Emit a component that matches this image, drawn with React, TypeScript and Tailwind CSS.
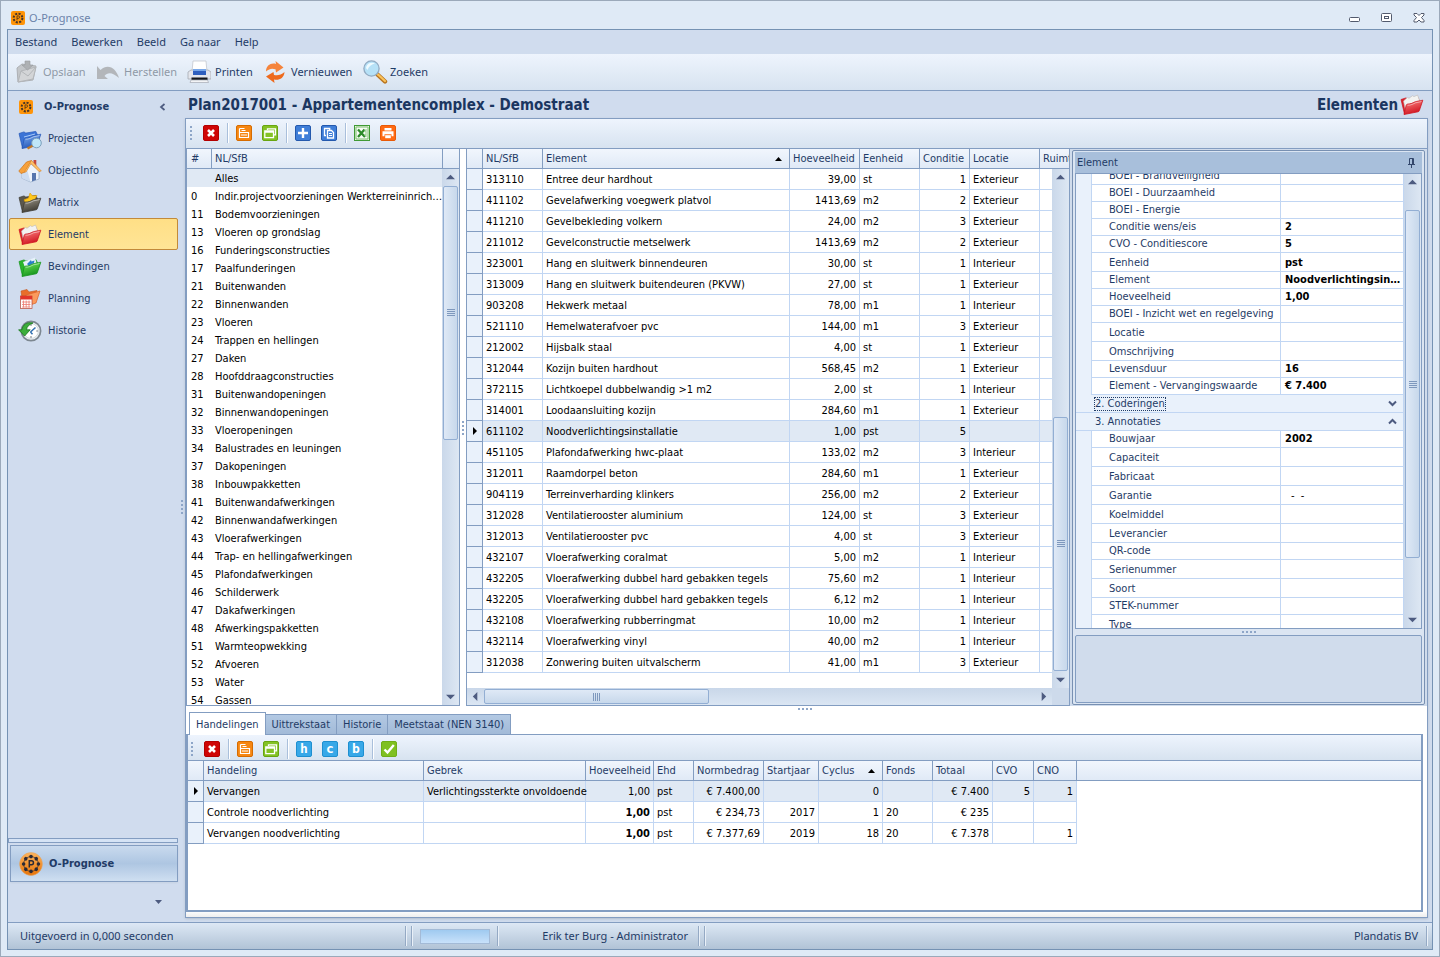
import React from 'react';
import { clsx } from 'clsx';

//DATA
const categories: [string, string][] = [
  ['', 'Alles'],
  ['0', 'Indir.projectvoorzieningen Werkterreininrichting'],
  ['11', 'Bodemvoorzieningen'],
  ['13', 'Vloeren op grondslag'],
  ['16', 'Funderingsconstructies'],
  ['17', 'Paalfunderingen'],
  ['21', 'Buitenwanden'],
  ['22', 'Binnenwanden'],
  ['23', 'Vloeren'],
  ['24', 'Trappen en hellingen'],
  ['27', 'Daken'],
  ['28', 'Hoofddraagconstructies'],
  ['31', 'Buitenwandopeningen'],
  ['32', 'Binnenwandopeningen'],
  ['33', 'Vloeropeningen'],
  ['34', 'Balustrades en leuningen'],
  ['37', 'Dakopeningen'],
  ['38', 'Inbouwpakketten'],
  ['41', 'Buitenwandafwerkingen'],
  ['42', 'Binnenwandafwerkingen'],
  ['43', 'Vloerafwerkingen'],
  ['44', 'Trap- en hellingafwerkingen'],
  ['45', 'Plafondafwerkingen'],
  ['46', 'Schilderwerk'],
  ['47', 'Dakafwerkingen'],
  ['48', 'Afwerkingspakketten'],
  ['51', 'Warmteopwekking'],
  ['52', 'Afvoeren'],
  ['53', 'Water'],
  ['54', 'Gassen'],
];

const elements: string[][] = [
  ['313110', 'Entree deur hardhout', '39,00', 'st', '1', 'Exterieur'],
  ['411102', 'Gevelafwerking voegwerk platvol', '1413,69', 'm2', '2', 'Exterieur'],
  ['411210', 'Gevelbekleding volkern', '24,00', 'm2', '3', 'Exterieur'],
  ['211012', 'Gevelconstructie metselwerk', '1413,69', 'm2', '2', 'Exterieur'],
  ['323001', 'Hang en sluitwerk binnendeuren', '30,00', 'st', '1', 'Interieur'],
  ['313009', 'Hang en sluitwerk buitendeuren (PKVW)', '27,00', 'st', '1', 'Exterieur'],
  ['903208', 'Hekwerk metaal', '78,00', 'm1', '1', 'Interieur'],
  ['521110', 'Hemelwaterafvoer pvc', '144,00', 'm1', '3', 'Exterieur'],
  ['212002', 'Hijsbalk staal', '4,00', 'st', '1', 'Exterieur'],
  ['312044', 'Kozijn buiten hardhout', '568,45', 'm2', '1', 'Exterieur'],
  ['372115', 'Lichtkoepel dubbelwandig >1 m2', '2,00', 'st', '1', 'Interieur'],
  ['314001', 'Loodaansluiting kozijn', '284,60', 'm1', '1', 'Exterieur'],
  ['611102', 'Noodverlichtingsinstallatie', '1,00', 'pst', '5', ''],
  ['451105', 'Plafondafwerking hwc-plaat', '133,02', 'm2', '3', 'Interieur'],
  ['312011', 'Raamdorpel beton', '284,60', 'm1', '1', 'Exterieur'],
  ['904119', 'Terreinverharding klinkers', '256,00', 'm2', '2', 'Exterieur'],
  ['312028', 'Ventilatierooster aluminium', '124,00', 'st', '3', 'Exterieur'],
  ['312013', 'Ventilatierooster pvc', '4,00', 'st', '3', 'Exterieur'],
  ['432107', 'Vloerafwerking coralmat', '5,00', 'm2', '1', 'Interieur'],
  ['432205', 'Vloerafwerking dubbel hard gebakken tegels', '75,60', 'm2', '1', 'Interieur'],
  ['432205', 'Vloerafwerking dubbel hard gebakken tegels', '6,12', 'm2', '1', 'Interieur'],
  ['432108', 'Vloerafwerking rubberringmat', '10,00', 'm2', '1', 'Interieur'],
  ['432114', 'Vloerafwerking vinyl', '40,00', 'm2', '1', 'Interieur'],
  ['312038', 'Zonwering buiten uitvalscherm', '41,00', 'm1', '3', 'Exterieur'],
];

type Prop = { label: string; value?: string; tall?: boolean; group?: 'open' | 'closed' };

const props: Prop[] = [
  { label: 'BOEI - Brandveiligheid' },
  { label: 'BOEI - Duurzaamheid' },
  { label: 'BOEI - Energie' },
  { label: 'Conditie wens/eis', value: '2' },
  { label: 'CVO - Conditiescore', value: '5' },
  { label: 'Eenheid', value: 'pst', tall: true },
  { label: 'Element', value: 'Noodverlichtingsinstallatie' },
  { label: 'Hoeveelheid', value: '1,00' },
  { label: 'BOEI - Inzicht wet en regelgeving' },
  { label: 'Locatie', tall: true },
  { label: 'Omschrijving', tall: true },
  { label: 'Levensduur', value: '16' },
  { label: 'Element - Vervangingswaarde', value: '€ 7.400' },
  { label: '2. Coderingen', group: 'closed' },
  { label: '3. Annotaties', group: 'open' },
  { label: 'Bouwjaar', value: '2002' },
  { label: 'Capaciteit', tall: true },
  { label: 'Fabricaat', tall: true },
  { label: 'Garantie', value: '-  -', tall: true },
  { label: 'Koelmiddel', tall: true },
  { label: 'Leverancier', tall: true },
  { label: 'QR-code' },
  { label: 'Serienummer', tall: true },
  { label: 'Soort', tall: true },
  { label: 'STEK-nummer' },
  { label: 'Type', tall: true },
];

const actions: string[][] = [
  ['Vervangen', 'Verlichtingssterkte onvoldoende', '1,00', 'pst', '€ 7.400,00', '', '0', '', '€ 7.400', '5', '1'],
  ['Controle noodverlichting', '', '1,00', 'pst', '€ 234,73', '2017', '1', '20', '€ 235', '', ''],
  ['Vervangen noodverlichting', '', '1,00', 'pst', '€ 7.377,69', '2019', '18', '20', '€ 7.378', '', '1'],
];

const th = 'h-5 border-r border-b border-[#839dc1] px-[3px] text-left font-normal text-[#1f3b66] whitespace-nowrap overflow-hidden';
const td = 'h-[21px] border-r border-b border-[#c1d6f3] pt-0.5 pl-[3px] whitespace-nowrap';
const headRow = 'bg-linear-to-b from-[#f1f6fd] to-[#dfe9f6]';
const indicator = 'h-[21px] border-r border-b border-[#839dc1] bg-[#e9f1fb] p-0';

//ICONS
const Logo = ({ size }: { size: number }) => (
  <svg width={size} height={size} viewBox="0 0 14 14">
    <rect width="14" height="14" rx="2" fill="#ff9408" />
    <circle cx="7" cy="7" r="4.4" fill="none" stroke="#46352a" strokeWidth="2" strokeDasharray="2.1 1.35" />
    <path d="M6 9.3V4.9h1.3a1.2 1.2 0 010 2.5H6" fill="none" stroke="#5b3a14" strokeWidth="0.9" />
  </svg>
);

const RoundLogo = () => (
  <svg width="24" height="24" viewBox="0 0 24 24">
    <defs>
      <linearGradient id="round" x1="0" y1="0" x2="0" y2="1">
        <stop offset="0" stopColor="#fdb45c" />
        <stop offset="1" stopColor="#e87408" />
      </linearGradient>
    </defs>
    <circle cx="12" cy="12" r="11.4" fill="url(#round)" stroke="#e2a463" strokeWidth="0.6" />
    <circle cx="12" cy="12" r="7.4" fill="none" stroke="#2c2a35" strokeWidth="0.7" />
    {[0, 45, 90, 135, 180, 225, 270, 315].map((a) => (
      <circle key={a} cx="12" cy="4.6" r="1.8" fill="#2c2a35" transform={`rotate(${a} 12 12)`} />
    ))}
    <path d="M10.3 15.5V8.8h2.2a1.9 1.9 0 010 3.900h-2.200" fill="none" stroke="#2c2a35" strokeWidth="1.5" />
  </svg>
);

const Folder = ({ id, light, dark, back, children }: { id: string; light: string; dark: string; back: string; children?: React.ReactNode }) => (
  <svg width="24" height="22" viewBox="0 0 24 22">
    <defs>
      <linearGradient id={id} x1="0" y1="0" x2="0.4" y2="1">
        <stop offset="0" stopColor={light} />
        <stop offset="1" stopColor={dark} />
      </linearGradient>
    </defs>
    <path d="M1 5.500l5-1.600 1.800 1.200 10-1.700L20 8 4.500 20z" fill={back} stroke={dark} strokeWidth="0.7" />
    {children}
    <path d="M4 20.500L6.200 11.300c.2-.7.7-1.100 1.400-1.200 3 .2 5-1.100 7.500-2.300.7-.3 7.700-1.600 7.700-1.600l-3.500 10.500c-.2.6-.7 1-1.300 1.100z" fill={`url(#${id})`} stroke={dark} strokeWidth="0.8" strokeLinejoin="round" />
    <path d="M7.500 11.200c3.500.2 5.500-1.300 8-2.400l6-1.200" fill="none" stroke="#fff" strokeOpacity="0.6" strokeWidth="0.8" />
  </svg>
);

const paper = <path d="M3.500 7l4-3.600 1.500.8 3.500-2.500 1.500.9L17.500 1l2.300 6-12.300 3.500-2 6z" fill="#f3f3f1" stroke="#bdb9b6" strokeWidth="0.6" />;

const RedFolder = ({ id }: { id: string }) => (
  <Folder id={id} light="#ff8a86" dark="#cf1420" back="#d8222a">
    {paper}
  </Folder>
);

const NavIcon = ({ name }: { name: string }) => {
  switch (name) {
    case 'Projecten':
      return (
        <Folder id="f-blue" light="#7fb0f4" dark="#2457b8" back="#3c74d6">
          <path d="M6 9l11-3" stroke="#a9cbf8" />
        </Folder>
      );
    case 'Matrix':
      return (
        <Folder id="f-dark" light="#a39d8e" dark="#3e3b33" back="#5b574c">
          <path d="M12 1l2.400 2.800 4.600-.3-2 3.400 2 2.600L8 11.500 6 7.800l4.500-1.700z" fill="#ffc81c" stroke="#e29a06" strokeWidth="0.6" />
        </Folder>
      );
    case 'Element':
      return <RedFolder id="f-red" />;
    case 'Bevindingen':
      return (
        <Folder id="f-green" light="#74ea5b" dark="#14931c" back="#29b52c">
          <path d="M5 6l12-4.500 2 7-12 3z" fill="#e6f1fa" />
          <path d="M9 8l4-4 .5 1.500 3-1-1 4-1-1L11 10z" fill="#2a7fc9" />
        </Folder>
      );
    case 'Planning':
      return (
        <svg width="24" height="22" viewBox="0 0 24 22">
          <path d="M3 3l6-1.500L11 4l8-1.500-3 12-11 3z" fill="#e96d2b" stroke="#c4561c" strokeWidth="0.6" />
          <path d="M8 7l14-4-4 12-9 3z" fill="#fb9a5c" stroke="#d8622a" strokeWidth="0.7" />
          <rect x="2.500" y="8" width="11.500" height="12.500" fill="#fff" stroke="#b6402f" strokeWidth="0.7" />
          <path d="M2.500 8H14v3.500H2.500z" fill="#e2352a" />
          <path d="M4 14h8.500M4 16.500h8.500M4 19h8.500M5.500 12.500v7M8.200 12.500v7M11 12.500v7" stroke="#ec7a70" strokeWidth="0.8" />
        </svg>
      );
    case 'Historie':
      return (
        <svg width="24" height="22" viewBox="0 0 24 22">
          <circle cx="13" cy="11" r="9.600" fill="#eef2f5" stroke="#7c8790" strokeWidth="1.700" />
          <circle cx="13" cy="11" r="7.400" fill="#fff" stroke="#c6d0d7" strokeWidth="0.8" />
          <path d="M13 4.200v1.600M13 16.200v1.600M18.400 11h1.400" stroke="#55616b" />
          <path d="M12.500 12l5-4.500M12.500 12l2 2.200" stroke="#2f6fb0" strokeWidth="1.500" />
          <path d="M15 3C8.500 1.500 4.500 5 4 9.800H.6L6.600 16l5.600-6.200H8.500C8.800 6.500 11.300 4.300 15 3z" fill="#3cae3b" stroke="#17751c" strokeWidth="0.8" />
        </svg>
      );
    default:
      return (
        <svg width="24" height="24" viewBox="0 0 24 24">
          <path d="M15.500 1h2.800v6h-2.800z" fill="#c5463a" />
          <path d="M3.500 11l7.500-7.500 10 8V20L12.500 23l-9-4z" fill="#eef3fa" stroke="#94a9c6" strokeWidth="0.7" />
          <path d="M3.500 12L8 7l4.500 15.800-9-3.800z" fill="#cddcf0" />
          <path d="M.8 12L8.500 3l5-1.500L7.300 13 3 14.500z" fill="#f7a13b" stroke="#cf7314" strokeWidth="0.7" />
          <path d="M13.500 1.500L23.300 12l-2.300.5-8-8-5 8.500-1.500-.2z" fill="#ffc16a" stroke="#d9821f" strokeWidth="0.6" />
          <path d="M14 14h4v7L14 22.500z" fill="#5876ad" />
        </svg>
      );
  }
};

const Glass = () => (
  <svg className="absolute right-0 bottom-0" width="16" height="13" viewBox="0 0 16 13">
    <path d="M7 8.500l-5.500 3" stroke="#c07a2a" strokeWidth="2.400" />
    <circle cx="10.500" cy="6" r="4.800" fill="#bfe6f8" stroke="#7c9fbb" />
  </svg>
);

const tiles: Record<string, [string, string, React.ReactNode]> = {
  Verwijderen: ['#cf0505', '#b30000', <path key="p" d="M5 5l6 6M11 5l-6 6" stroke="#fff" strokeWidth="2.600" />],
  Kaart: [
    '#f68712',
    '#d66c00',
    <path key="p" d="M3.500 3.500v9h9v-5h-9M3.500 3.500h5M5.500 5.500h4M5 10h6" fill="none" stroke="#fff" strokeWidth="1.200" />,
  ],
  Vensters: ['#84c225', '#68a510', <path key="p" d="M5.500 5V3.800h8v6h-1.600M2.800 6h8.700v6.600H2.800zM2.800 7.200h8.700" fill="none" stroke="#fff" strokeWidth="1.300" />],
  Toevoegen: ['#3f7ed8', '#2459ad', <path key="p" d="M8 3v10M3 8h10" stroke="#fff" strokeWidth="2.400" />],
  Kopiëren: [
    '#3f7ed8',
    '#2459ad',
    <g key="g" stroke="#fff" fill="none">
      <path d="M5 10.500H3.500v-7h5.200V5" strokeWidth="1.300" />
      <path d="M6.500 5.500h4l2 2v5.500h-6z" fill="#3f7ed8" strokeWidth="1.300" />
      <path d="M8 8.500h3M8 10.500h3" />
    </g>,
  ],
  Excel: [
    '#e9f4e2',
    '#3f9a35',
    <g key="g">
      <path d="M2 2h12v12H2z" fill="#f8fcf6" stroke="#79bd6d" />
      <path d="M4 4.500l7 7.500M10.500 4.500L4 12" stroke="#2c8a2a" strokeWidth="2.300" />
      <path d="M12 4v8M12 6h-2M12 10h-2" stroke="#8cc983" />
    </g>,
  ],
  Afdrukken: [
    '#ff6a13',
    '#e85a08',
    <g key="g">
      <path d="M4.500 3h7v2.500h-7zM2.500 6.300h11v5h-2v-2h-7v2h-2z" fill="#fff" />
      <path d="M5.200 10.200h5.600v3H5.200z" fill="#fff" />
    </g>,
  ],
  Akkoord: ['#7fc020', '#6fae17', <path key="p" d="M3.500 8.500l3 3L12.800 4" fill="none" stroke="#fff" strokeWidth="2.400" />],
};

const Tile = ({ name }: { name: string }) => {
  const tile = tiles[name];
  if (!tile) {
    return (
      <button
        aria-label={name}
        className="flex size-4 items-center justify-center rounded-xs border border-[#1e8fd0] bg-[#38a8e8] font-['DejaVu_Sans_Mono',monospace] text-[13px] leading-none font-bold text-white"
      >
        {name}
      </button>
    );
  }
  return (
    <button aria-label={name} className="size-4">
      <svg width="16" height="16" viewBox="0 0 16 16">
        <rect x="0.5" y="0.5" width="15" height="15" rx={name === 'Excel' ? 0 : 1.5} fill={tile[0]} stroke={tile[1]} />
        {tile[2]}
      </svg>
    </button>
  );
};

const Dots = ({ vertical }: { vertical?: boolean }) => (
  <div className={clsx('flex gap-0.5', vertical && 'flex-col')}>
    {[0, 1, 2, 3].map((i) => (
      <span key={i} className="size-0.5 bg-[#8ea6c8]" />
    ))}
  </div>
);

const Toolbar = ({ groups, className }: { groups: string[][]; className: string }) => (
  <div className={clsx('flex shrink-0 items-center border-b border-[#839dc1] bg-linear-to-b from-[#eef4fd] to-[#d7e3f0]', className)}>
    <Dots vertical />
    {groups.map((group, i) => (
      <React.Fragment key={i}>
        {i > 0 && <div className="mr-[7px] ml-2 h-5 w-0.5 border-r border-l border-r-white border-l-[#a9bfdb]" />}
        <div className={clsx('flex gap-2.5', i === 0 && 'ml-[11px]')}>
          {group.map((name) => (
            <Tile key={name} name={name} />
          ))}
        </div>
      </React.Fragment>
    ))}
  </div>
);

//SCROLLBAR
const Arrow = ({ d }: { d: string }) => (
  <span className="flex size-[17px] shrink-0 items-center justify-center">
    <svg width="9" height="9" viewBox="0 0 10 10">
      <path d={d} fill="#4d5b80" />
    </svg>
  </span>
);

const Scrollbar = ({ before, thumb, after, horizontal }: { before: number; thumb: number; after: number; horizontal?: boolean }) => (
  <div
    className={clsx(
      'flex',
      horizontal ? 'h-[17px] w-full bg-linear-to-b from-[#c9d7e9] to-[#dbe6f3]' : 'h-full w-[17px] flex-col bg-linear-to-r from-[#cad8ea] to-[#dde7f3]'
    )}
  >
    <Arrow d={horizontal ? 'M7 0v10L2 5z' : 'M0 7h10L5 2z'} />
    <div style={{ flexGrow: before }} />
    <div
      style={{ flexGrow: thumb }}
      className={clsx(
        'flex basis-0 items-center justify-center rounded-xs border border-[#92aed3]',
        horizontal ? 'my-px bg-linear-to-b from-[#dfe9f6] to-[#c7d8eb]' : 'mx-px bg-linear-to-r from-[#dfe9f6] to-[#c7d8eb]'
      )}
    >
      <div className={clsx('flex gap-px', !horizontal && 'flex-col')}>
        {[0, 1, 2, 3].map((i) => (
          <span key={i} className={clsx('bg-[#7e98bd]', horizontal ? 'h-2 w-px' : 'h-px w-2')} />
        ))}
      </div>
    </div>
    <div style={{ flexGrow: after }} />
    <Arrow d={horizontal ? 'M3 0v10l5-5z' : 'M0 3h10L5 8z'} />
  </div>
);

const SortMark = () => (
  <svg className="mr-1 shrink-0" width="7" height="4" viewBox="0 0 7 4">
    <path d="M0 4h7L3.500 0z" fill="#000" />
  </svg>
);

const RowMark = () => (
  <svg className="mx-auto" width="4" height="8" viewBox="0 0 4 8">
    <path d="M0 0v8l4-4z" fill="#000" />
  </svg>
);

//PANELS
const CategoryTable = () => (
  <div className="relative w-[274px] shrink-0 overflow-hidden border-x border-b border-[#839dc1] bg-white">
    <table className="w-full table-fixed border-separate border-spacing-0">
      <colgroup>
        <col className="w-[25px]" />
        <col />
        <col className="w-4" />
      </colgroup>
      <thead>
        <tr className={headRow}>
          <th className={clsx(th, 'pl-1')}>#</th>
          <th className={th}>NL/SfB</th>
          <th className="h-5 border-b border-[#839dc1]"></th>
        </tr>
      </thead>
      <tbody>
        {categories.map(([code, name]) => (
          <tr key={code} className={code === '' ? 'bg-[#e0e9f4]' : ''}>
            <td className="h-[18px] pt-0.5 pl-1">{code}</td>
            <td className="h-[18px] truncate pt-0.5 pl-[3px]">{name}</td>
            <td></td>
          </tr>
        ))}
      </tbody>
    </table>
    <div className="absolute top-5 right-0 bottom-0">
      <Scrollbar before={0} thumb={254} after={250} />
    </div>
  </div>
);

const ElementTable = () => (
  <div className="relative min-w-0 flex-1 overflow-hidden border-x border-b border-[#839dc1] bg-white">
    <table className="w-full table-fixed border-separate border-spacing-0">
      <colgroup>
        <col className="w-4" />
        <col className="w-[60px]" />
        <col />
        <col className="w-[70px]" />
        <col className="w-[60px]" />
        <col className="w-[50px]" />
        <col className="w-[70px]" />
        <col className="w-[29px]" />
      </colgroup>
      <thead>
        <tr className={headRow}>
          <th className={th}></th>
          <th className={th}>NL/SfB</th>
          <th className={th}>
            <div className="flex items-center justify-between">
              Element
              <SortMark />
            </div>
          </th>
          <th className={th}>Hoeveelheid</th>
          <th className={th}>Eenheid</th>
          <th className={th}>Conditie</th>
          <th className={th}>Locatie</th>
          <th className="overflow-hidden border-b border-[#839dc1] pl-[3px] text-left font-normal whitespace-nowrap text-[#1f3b66]">Ruimte</th>
        </tr>
      </thead>
      <tbody>
        {elements.map((row, i) => (
          <tr key={i} className={row[0] === '611102' ? 'bg-[#e0e9f4]' : ''}>
            <td className={indicator}>{row[0] === '611102' && <RowMark />}</td>
            {row.map((value, c) => (
              <td key={c} className={clsx(td, (c === 2 || c === 4) && 'pr-[3px] text-right')}>
                {value}
              </td>
            ))}
            <td className="border-b border-[#c1d6f3]"></td>
          </tr>
        ))}
      </tbody>
    </table>
    <div className="absolute top-5 right-0 bottom-[17px]">
      <Scrollbar before={231} thumb={253} after={0} />
    </div>
    <div className="absolute inset-x-0 bottom-0 bg-[#cddaeb] pr-[17px]">
      <Scrollbar horizontal before={0} thumb={224} after={328} />
    </div>
  </div>
);

const PropertyPanel = () => (
  <div className="flex w-[357px] shrink-0 flex-col bg-[#d0dcec] px-0.5 py-px">
    <div className="flex min-h-0 flex-1 flex-col rounded-xs border border-[#7890b2] bg-[#dbe5f2] px-0.5 py-px">
      <div className="flex h-[22px] shrink-0 items-center justify-between border-b border-[#839dc1] bg-[#a8bfdb] px-0.5 text-[#1f3b66]">
        Element
        <button aria-label="Vastzetten" className="mr-1">
          <svg width="9" height="10" viewBox="0 0 9 10">
            <path d="M2.500 6V.5h4V6M1 6.500h7M4.500 6.500V10M5.500.5V6" fill="none" stroke="#33476c" />
          </svg>
        </button>
      </div>
      <div className="flex min-h-0 flex-1 border-x border-b border-[#839dc1] bg-white">
        <div className="min-w-0 flex-1 overflow-hidden border-r border-[#c1d6f3]">
          <table className="-mt-1.5 w-full table-fixed border-separate border-spacing-0 text-[#1f3b66]">
            <colgroup>
              <col className="w-4" />
              <col className="w-[189px]" />
              <col />
            </colgroup>
            <tbody>
              {props.map((p) =>
                p.group ? (
                  <tr key={p.label} className="bg-[#e9f1fb]">
                    <td colSpan={3} className="h-[18px] border-b border-[#c1d6f3] p-0">
                      <button className="flex h-[17px] w-full items-center justify-between pr-1.5 pl-[19px]">
                        <span className={clsx('leading-3', p.group === 'closed' && 'outline outline-dotted outline-[#1f3b66]')}>{p.label}</span>
                        <svg width="9" height="7" viewBox="0 0 9 7">
                          <path d={p.group === 'closed' ? 'M1 1.500l3.500 3.500L8 1.500' : 'M1 5.500L4.500 2 8 5.500'} fill="none" stroke="#4d5b80" strokeWidth="2" />
                        </svg>
                      </button>
                    </td>
                  </tr>
                ) : (
                  <tr key={p.label}>
                    <td className="border-r border-[#c1d6f3] bg-[#e9f1fb] p-0"></td>
                    <td
                      className={clsx('overflow-hidden border-r border-b border-[#c1d6f3] pl-[17px] whitespace-nowrap', p.tall ? 'h-[19px] pt-0.5' : 'h-[17px] leading-4')}
                    >
                      {p.label}
                    </td>
                    <td
                      className={clsx(
                        'truncate border-b border-[#c1d6f3] whitespace-pre text-black',
                        p.label === 'Garantie' ? 'pl-2.5' : 'pl-1 font-bold',
                        p.tall && 'pt-0.5'
                      )}
                    >
                      {p.value}
                    </td>
                  </tr>
                )
              )}
            </tbody>
          </table>
        </div>
        <Scrollbar before={19} thumb={348} after={53} />
      </div>
      <div className="flex h-1.5 shrink-0 items-center justify-center">
        <Dots />
      </div>
      <div className="h-[68px] shrink-0 rounded-xs border border-[#839dc1] bg-[#d0dcec]" />
    </div>
  </div>
);

const ActionTable = () => (
  <table className="w-full table-fixed border-separate border-spacing-0">
    <colgroup>
      <col className="w-4" />
      <col className="w-[220px]" />
      <col className="w-[162px]" />
      <col className="w-[68px]" />
      <col className="w-10" />
      <col className="w-[70px]" />
      <col className="w-[55px]" />
      <col className="w-16" />
      <col className="w-[50px]" />
      <col className="w-[60px]" />
      <col className="w-[41px]" />
      <col className="w-[43px]" />
      <col />
    </colgroup>
    <thead>
      <tr className={headRow}>
        {['', 'Handeling', 'Gebrek', 'Hoeveelheid', 'Ehd', 'Normbedrag', 'Startjaar', 'Cyclus', 'Fonds', 'Totaal', 'CVO', 'CNO'].map((label) => (
          <th key={label} className={th}>
            <div className="flex items-center justify-between">
              {label}
              {label === 'Cyclus' && <SortMark />}
            </div>
          </th>
        ))}
        <th className="border-b border-[#839dc1]"></th>
      </tr>
    </thead>
    <tbody>
      {actions.map((row, i) => (
        <tr key={i}>
          <td className={indicator}>{i === 0 && <RowMark />}</td>
          {row.map((value, c) => (
            <td
              key={c}
              className={clsx(td, i === 0 && 'bg-[#e0e9f4]', [2, 4, 5, 6, 8, 9, 10].includes(c) && 'pr-[3px] text-right', c === 2 && i > 0 && 'font-bold')}
            >
              {value}
            </td>
          ))}
          <td></td>
        </tr>
      ))}
    </tbody>
  </table>
);

const Sidebar = () => (
  <aside className="flex w-[177px] shrink-0 text-[#1f3b66]">
    <div className="flex flex-1 flex-col">
      <div className="flex h-[31px] items-center pr-3 pl-[11px]">
        <Logo size={14} />
        <span className="ml-[11px] flex-1 font-bold">O-Prognose</span>
        <button aria-label="Inklappen">
          <svg width="7" height="8" viewBox="0 0 7 8">
            <path d="M5.500 1L2 4l3.500 3" fill="none" stroke="#4d5b80" strokeWidth="1.700" />
          </svg>
        </button>
      </div>
      <nav className="flex-1 pl-px">
        {['Projecten', 'ObjectInfo', 'Matrix', 'Element', 'Bevindingen', 'Planning', 'Historie'].map((name) => (
          <a
            key={name}
            href="#"
            className={clsx(
              'flex h-8 items-center gap-1.5 border pt-0.5 pl-2',
              name === 'Element' ? 'rounded-xs border-[#c28a3a] bg-linear-to-b from-[#ffdf86] to-[#ffe596]' : 'border-transparent'
            )}
          >
            <span className="relative">
              <NavIcon name={name} />
              {name === 'Projecten' && <Glass />}
            </span>
            {name}
          </a>
        ))}
      </nav>
      <div className="h-[5px] border border-[#839dc1] bg-[#d5e3f5]" />
      <button className="mt-0.5 ml-0.5 flex h-[37px] items-center gap-1.5 border border-[#839dc1] bg-linear-to-b from-[#c9daee] via-[#aec6e2] to-[#cfdff1] pl-2 font-bold shadow-xs">
        <RoundLogo />
        O-Prognose
      </button>
      <button aria-label="Meer" className="mt-4 mr-4 mb-[17px] flex h-[7px] items-center self-end">
        <svg width="7" height="4" viewBox="0 0 7 4">
          <path d="M0 0h7L3.500 4z" fill="#4d5b80" />
        </svg>
      </button>
    </div>
    <div className="flex w-[7px] items-center pl-[3px]">
      <Dots vertical />
    </div>
  </aside>
);

const MainToolbar = () => (
  <div className="flex h-[37px] shrink-0 items-center border-b border-[#839dc1] bg-linear-to-b from-[#eef4fd] to-[#d7e3f0] pl-[7px] text-[#1f3b66]">
    <button className="flex w-[81px] items-center gap-1 text-[#8f99a6]" disabled>
      <svg width="24" height="24" viewBox="0 0 24 24">
        <path d="M2 8l5-4 6 1 8 1-3 14L3 22z" fill="#c3c6c9" stroke="#adb0b4" />
        <path d="M3 22l3-11 15-4-3 12z" fill="#d3d5d7" stroke="#b3b6b9" />
        <path d="M6 11l7 5 8-9" fill="none" stroke="#b3b6b9" />
        <path d="M10 1h5v4h3l-5.500 5L7 5h3z" fill="#aeb1b4" stroke="#989b9f" strokeWidth="0.6" />
      </svg>
      Opslaan
    </button>
    <button className="flex w-[91px] items-center gap-1 text-[#8f99a6]" disabled>
      <svg width="24" height="24" viewBox="0 0 24 24">
        <path d="M1 6v13h11l-3.500-3c3-4 8-4 14.500 2C20 8 12 3 4.500 10z" fill="#b3b6ba" />
      </svg>
      Herstellen
    </button>
    <button className="flex w-[76px] items-center gap-1">
      <svg width="24" height="24" viewBox="0 0 24 24">
        <path d="M6 1h13l1 11H5z" fill="#fff" stroke="#c4c8cf" strokeWidth="0.8" />
        <path d="M1 12l3-2h17l3 2v7H1z" fill="#e4e6ec" stroke="#a5a9b3" strokeWidth="0.8" />
        <path d="M6 9h13v6H6z" fill="#2f5fbe" />
        <path d="M6 9h13v2H6z" fill="#79a8ea" />
        <path d="M4.500 17.500h16V20h-16z" fill="#15171c" />
        <path d="M4 20h16.500l1 2.500H3z" fill="#f3f4f6" stroke="#a5a9b3" strokeWidth="0.7" />
      </svg>
      Printen
    </button>
    <button className="flex w-[99px] items-center gap-1">
      <svg width="24" height="24" viewBox="0 0 24 24">
        <path d="M3 11.500C3 5.500 8 2.500 13 4L12.500 1l8 6.500-7.500 5-.5-3.200C9 8 6.500 8.500 3 11.500z" fill="#f5843c" />
        <path d="M21.500 12c-.5 6.500-5.500 8.500-10.500 7.500l.5 3.500L3 16.500 10.500 12l.5 3c4 .8 7 0 10.500-3z" fill="#ee6a1d" />
      </svg>
      Vernieuwen
    </button>
    <button className="flex items-center gap-0.5">
      <svg width="26" height="24" viewBox="0 0 26 24">
        <path d="M15.500 14.500l7.500 7" stroke="#b87420" strokeWidth="4.400" strokeLinecap="round" />
        <path d="M16 14.500l7 6.500" stroke="#fbc35a" strokeWidth="2.200" strokeLinecap="round" />
        <circle cx="9.500" cy="8.500" r="7.600" fill="#b6e1f7" stroke="#91aac2" strokeWidth="1.300" />
        <path d="M4 8a6 6 0 019-4.500C10 4 7 6 5.500 10z" fill="#eefaff" />
      </svg>
      Zoeken
    </button>
  </div>
);

const Divider = ({ className }: { className?: string }) => <span className={clsx('h-5 w-0.5 border-r border-l border-r-[#e9f0f8] border-l-[#94a9c4]', className)} />;

export default function App() {
  const caption = "font-['Noto_Sans','Open_Sans',sans-serif] text-[11px]";
  return (
    <div className="flex h-screen w-full flex-col overflow-hidden border border-[#9ba9ba] bg-[#dfeaf6] px-1.5 pb-1.5 font-['DejaVu_Sans_Condensed','DejaVu_Sans',sans-serif] text-[11px] leading-4 text-black">
      {/* TITLE BAR */}
      <header className={clsx('flex h-7 shrink-0 items-center pr-2 pl-1 text-[#6c83aa]', caption)}>
        <div className="mt-1.5 flex flex-1 items-center gap-1">
          <Logo size={14} />
          O-Prognose
        </div>
        <div className="mt-1.5 flex items-center gap-5">
          <button aria-label="Minimaliseren">
            <svg width="12" height="12" viewBox="0 0 12 12">
              <rect x="0.5" y="5.500" width="10" height="4" rx="1" fill="#fff" stroke="#525a6d" />
            </svg>
          </button>
          <button aria-label="Maximaliseren">
            <svg width="12" height="12" viewBox="0 0 12 12">
              <rect x="0.5" y="1.500" width="10" height="8" rx="1" fill="#fff" stroke="#525a6d" />
              <rect x="3.500" y="4.500" width="4" height="2" fill="none" stroke="#525a6d" />
            </svg>
          </button>
          <button aria-label="Sluiten">
            <svg width="12" height="12" viewBox="0 0 12 12">
              <path d="M1 1.500h3l2 2 2-2h3v1.500L8.500 5.500 11 8.500V10H8L6 8l-2 2H1V8.500l2.500-3L1 3z" fill="#fff" stroke="#525a6d" />
            </svg>
          </button>
        </div>
      </header>
      <div className="flex min-h-0 flex-1 flex-col border border-[#7592b3] bg-[#d0dcee]">
        {/* MENU */}
        <nav className={clsx('flex h-6 shrink-0 items-center gap-3.5 pl-[7px] text-[#1f3b66]', caption)}>
          {['Bestand', 'Bewerken', 'Beeld', 'Ga naar', 'Help'].map((name) => (
            <button key={name}>{name}</button>
          ))}
        </nav>
        <div className={caption}>
          <MainToolbar />
        </div>
        <div className="flex min-h-0 flex-1">
          <Sidebar />
          <main className="flex min-w-0 flex-1 flex-col pr-1 pb-1">
            <div className="flex h-[27px] shrink-0 items-center justify-between pr-1 pl-[3px] text-[15px] font-bold text-[#1b3660]">
              <h1>Plan2017001 - Appartementencomplex - Demostraat</h1>
              <span className="flex items-center gap-0.5">
                Elementen
                <RedFolder id="f-title" />
              </span>
            </div>
            <div className="flex min-h-0 flex-1 flex-col border border-[#839dc1] bg-white shadow-sm">
              <Toolbar
                className="h-[30px] pb-0.5 pl-1"
                groups={[['Verwijderen'], ['Kaart', 'Vensters'], ['Toevoegen', 'Kopiëren'], ['Excel', 'Afdrukken']]}
              />
              {/* OVERVIEW */}
              <div className="flex min-h-0 flex-1">
                <CategoryTable />
                <div className="flex w-1.5 shrink-0 items-center justify-center">
                  <Dots vertical />
                </div>
                <ElementTable />
                <PropertyPanel />
              </div>
              {/* ACTIONS */}
              <div className="flex h-[211px] shrink-0 flex-col bg-linear-to-b from-white from-97% to-[#eeeeee] pr-1 pb-[5px]">
                <div className="flex h-1.5 items-center justify-center">
                  <Dots />
                </div>
                <div className="-mb-px flex items-end pl-[3px] text-[#1f3b66]" role="tablist">
                  <button role="tab" className="z-10 h-[23px] border border-b-0 border-[#839dc1] bg-white px-1.5 pt-px">
                    Handelingen
                  </button>
                  {['Uittrekstaat', 'Historie', 'Meetstaat (NEN 3140)'].map((name) => (
                    <button key={name} role="tab" className="h-[21px] border border-l-0 border-[#839dc1] bg-linear-to-b from-[#b3c9e3] to-[#a2bad8] px-1.5 pt-px">
                      {name}
                    </button>
                  ))}
                </div>
                <div className="flex min-h-0 flex-1 flex-col border-x-2 border-t border-b-2 border-[#839dc1] bg-white">
                  <Toolbar className="h-[26px] pt-0.5 pl-[3px]" groups={[['Verwijderen'], ['Kaart', 'Vensters'], ['h', 'c', 'b'], ['Akkoord']]} />
                  <ActionTable />
                </div>
              </div>
            </div>
          </main>
        </div>
        {/* STATUS BAR */}
        <footer
          className={clsx(
            'flex h-[27px] shrink-0 items-center border-t border-[#839dc1] bg-linear-to-b from-[#dde8f5] to-[#b1c3d6] pr-1 pl-3 text-[#1f3b66]',
            caption
          )}
        >
          <span className="w-[385px]">Uitgevoerd in 0,000 seconden</span>
          <Divider />
          <Divider className="ml-1" />
          <span className="mx-[7px] h-[15px] w-[70px] border border-[#a3bad6] bg-linear-to-b from-[#9fcaf0] to-[#c8e1fa]" />
          <Divider />
          <span className="w-[199px] px-2.5 text-right">Erik ter Burg - Administrator</span>
          <Divider />
          <Divider className="ml-1" />
          <span className="flex-1 pr-2 text-right">Plandatis BV</span>
          <Divider />
        </footer>
      </div>
    </div>
  );
}
